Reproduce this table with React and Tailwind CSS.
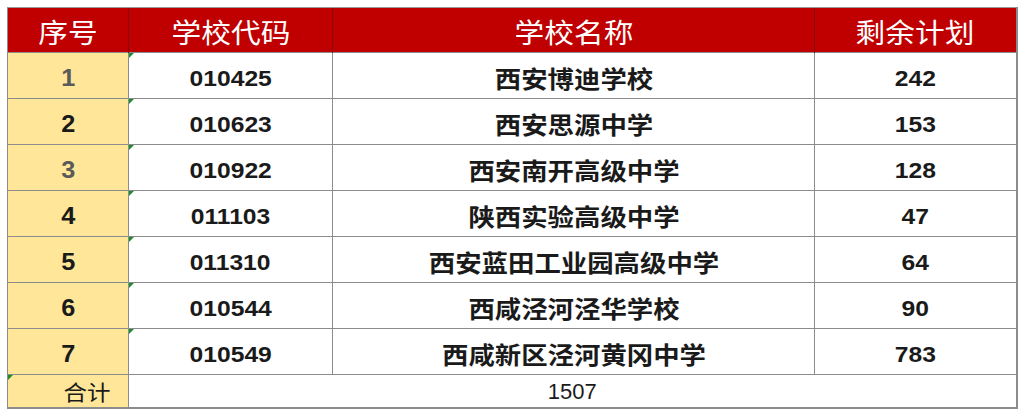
import React from 'react';

const rows = [
    { no: '1', code: '010425', name: '西安博迪学校', left: '242', gray: true },
    { no: '2', code: '010623', name: '西安思源中学', left: '153' },
    { no: '3', code: '010922', name: '西安南开高级中学', left: '128', gray: true },
    { no: '4', code: '011103', name: '陕西实验高级中学', left: '47' },
    { no: '5', code: '011310', name: '西安蓝田工业园高级中学', left: '64' },
    { no: '6', code: '010544', name: '西咸泾河泾华学校', left: '90' },
    { no: '7', code: '010549', name: '西咸新区泾河黄冈中学', left: '783' },
];

const cjk = { fontFamily: '"Noto Sans CJK SC", "Noto Sans", sans-serif' };
const num = { fontFamily: '"Liberation Sans", Arial, "Noto Sans CJK SC", sans-serif' };

// little green "number stored as text" flag in the corner of a cell
const Flag = () => (
    <span className="absolute left-0 top-0 w-0 h-0 border-t-[5px] border-t-[#1e8c2e] border-r-[5px] border-r-transparent" />
);

const App = () => {
    return (
        <div className="w-[1024px] h-[415px] bg-white pl-[7px] pt-[7px]">
            <table className="table-fixed border-collapse w-[1009px] border-r-2 border-b-2 border-r-[#8c8c8c] border-b-[#8c8c8c]">
                <colgroup>
                    <col className="w-[121px]" />
                    <col className="w-[204px]" />
                    <col className="w-[482px]" />
                    <col className="w-[202px]" />
                </colgroup>
                <thead>
                    <tr className="h-[45px] bg-[#c00000] text-white" style={cjk}>
                        {['序号', '学校代码', '学校名称', '剩余计划'].map((t, i) => (
                            <th
                                key={t}
                                className={`p-0 pt-[3px] font-normal text-[27px] leading-none border-t border-t-[#9a9a9a] ${i === 0 ? 'border-l border-l-[#8c8c8c]' : 'border-l border-l-[#8a0a0a]'}`}
                            >
                                <span className="inline-block scale-x-[1.1]">{t}</span>
                            </th>
                        ))}
                    </tr>
                </thead>
                <tbody>
                    {rows.map((r) => (
                        <tr key={r.no} className="h-[46px]">
                            <td className="p-0 pt-[6px] text-center bg-[#ffe699] border border-[#8c8c8c] font-bold text-[23px] leading-none" style={num}>
                                <span className={`inline-block scale-x-[1.1] ${r.gray ? 'text-[#5a5a5a]' : 'text-[#1a1a1a]'}`}>{r.no}</span>
                            </td>
                            <td className="relative p-0 pt-[6px] text-center border border-[#8c8c8c] font-bold text-[22px] leading-none text-[#1a1a1a]" style={num}>
                                <Flag />
                                <span className="inline-block scale-x-[1.12]">{r.code}</span>
                            </td>
                            <td className="p-0 pt-[5px] text-center border border-[#8c8c8c] font-bold text-[24px] leading-none text-[#1a1a1a]" style={cjk}>
                                <span className="inline-block scale-x-[1.1]">{r.name}</span>
                            </td>
                            <td className="p-0 pt-[6px] text-center border border-[#8c8c8c] font-bold text-[22px] leading-none text-[#1a1a1a]" style={num}>
                                <span className="inline-block scale-x-[1.12]">{r.left}</span>
                            </td>
                        </tr>
                    ))}
                    <tr className="h-[33px]">
                        <td className="relative p-0 pt-[2px] pl-[58px] bg-[#ffe699] border border-[#8c8c8c] text-[21px] leading-none text-[#1a1a1a]" style={cjk}>
                            <Flag />
                            <span className="inline-block scale-x-[1.12]">合计</span>
                        </td>
                        <td colSpan={3} className="p-0 pt-[2px] text-center border border-[#8c8c8c] text-[22px] leading-none text-[#1a1a1a]" style={num}>
                            1507
                        </td>
                    </tr>
                </tbody>
            </table>
        </div>
    );
};

export default App;
